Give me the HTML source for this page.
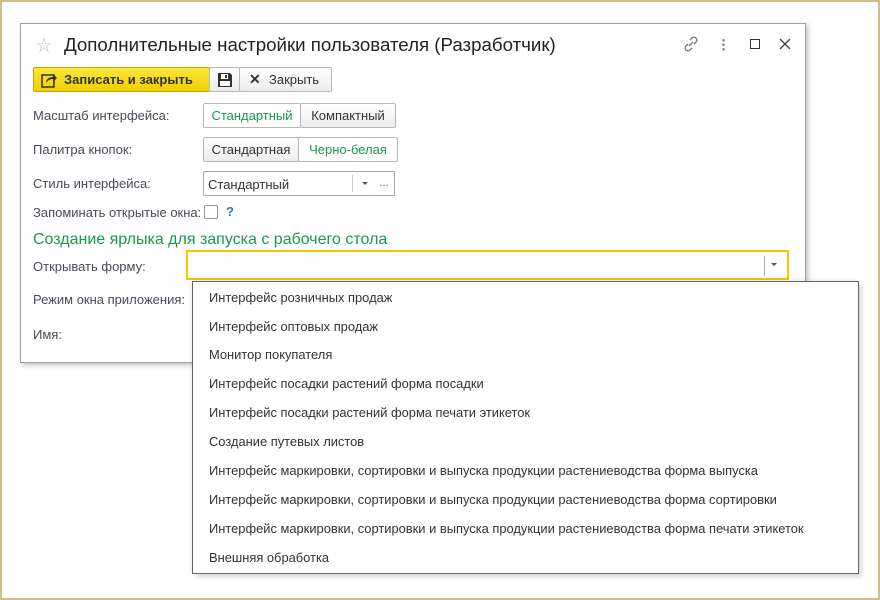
<!DOCTYPE html>
<html><head><meta charset="utf-8"><style>
*{box-sizing:border-box;margin:0;padding:0}
body{width:880px;height:600px;background:#fff;position:relative;overflow:hidden;font-family:"Liberation Sans",Arial,sans-serif;font-size:13px;color:#4d4d4d}
.a{position:absolute;white-space:nowrap}
.frame{left:0;top:0;width:880px;height:600px;border:2px solid #cfc08a;border-left-width:2px}
.win{left:20px;top:23px;width:786px;height:340px;border:1px solid #a0a0a0;background:#fff;box-shadow:2px 2px 5px rgba(0,0,0,.25)}
.btn{position:absolute;border:1px solid #b8b8b8;background:linear-gradient(#fff,#ececec);height:25px;line-height:23px;border-radius:2px;color:#333}
.lbl{position:absolute;color:#4a4a58}
.grn{color:#1a9a4a}
.dd{left:192px;top:281px;width:667px;height:293px;border:1px solid #666;background:#fff;box-shadow:3px 3px 4px rgba(0,0,0,.15),-2px -2px 3px rgba(0,0,0,.06)}
.it{position:absolute;left:16px;color:#333;font-size:12.9px}
</style></head><body>
<div class="a frame"></div>
<div class="a win"></div>
<div class="a" style="left:35px;top:33px;font-size:20px;color:#bbb">☆</div>
<div class="a" style="left:64px;top:34px;font-size:18.7px;color:#222">Дополнительные настройки пользователя (Разработчик)</div>
<svg class="a" style="left:682px;top:35px" width="18" height="18" viewBox="0 0 18 18" fill="none" stroke="#777" stroke-width="1.3"><path d="M7 11l4-4M8 5l2-2a2.8 2.8 0 014 4l-2 2M10 13l-2 2a2.8 2.8 0 01-4-4l2-2"/></svg>
<div class="a" style="left:722px;top:38px;width:3px;height:13px;background:radial-gradient(circle,#888 1.2px,transparent 1.4px) 0 0/3px 4.5px"></div>
<div class="a" style="left:750px;top:39px;width:10px;height:10px;border:1.5px solid #333"></div>
<svg class="a" style="left:779px;top:38px" width="12" height="12"><path d="M1 1L11 11M11 1L1 11" stroke="#444" stroke-width="1.3"/></svg>

<div class="btn" style="left:33px;top:67px;width:177px;background:linear-gradient(#fbe73c,#f0cf00);border-color:#c9a800;font-weight:bold;color:#333">
<svg style="position:absolute;left:7px;top:4px" width="16" height="16"><rect x="1" y="3" width="12" height="12" fill="none" stroke="#333" stroke-width="1.5"/><path d="M5 11c0-4 3-6 7-6V2l4 4-4 4V7c-3 0-5 1-7 4z" fill="#333"/></svg>
<span style="position:absolute;left:30px">Записать и закрыть</span></div>
<div class="btn" style="left:209px;top:67px;width:31px">
<svg style="position:absolute;left:7px;top:4px" width="16" height="16"><path d="M1 1h12l2 2v12H1z" fill="#333"/><rect x="4" y="2" width="7" height="5" fill="#fff"/><rect x="8" y="3" width="2" height="3" fill="#333"/><rect x="3" y="9" width="10" height="5" fill="#fff"/></svg></div>
<div class="btn" style="left:239px;top:67px;width:93px"><span style="position:absolute;left:9px;font-weight:bold;font-size:14px">✕</span><span style="position:absolute;left:29px">Закрыть</span></div>

<div class="lbl" style="left:33px;top:108px">Масштаб интерфейса:</div>
<div class="btn" style="left:203px;top:103px;width:98px;height:25px;background:#fff;text-align:center" ><span class="grn">Стандартный</span></div>
<div class="btn" style="left:300px;top:103px;width:96px;height:25px;text-align:center">Компактный</div>

<div class="lbl" style="left:33px;top:142px">Палитра кнопок:</div>
<div class="btn" style="left:203px;top:137px;width:96px;height:25px;text-align:center">Стандартная</div>
<div class="btn" style="left:298px;top:137px;width:100px;height:25px;background:#fff;text-align:center"><span class="grn">Черно-белая</span></div>

<div class="lbl" style="left:33px;top:176px">Стиль интерфейса:</div>
<div class="a" style="left:203px;top:171px;width:172px;height:25px;border:1px solid #aaa;background:#fff;border-radius:2px"><span style="position:absolute;left:4px;top:5px;color:#333">Стандартный</span><div style="position:absolute;left:148px;top:3px;width:1px;height:17px;background:#ccc"></div><div style="position:absolute;left:158px;top:10px;border:3px solid transparent;border-top:3px solid #555"></div></div>
<div class="a" style="left:374px;top:171px;width:21px;height:25px;border:1px solid #aaa;border-left:none;background:#fff;text-align:center;font-size:11px;line-height:23px;color:#555">...</div>

<div class="lbl" style="left:33px;top:205px">Запоминать открытые окна:</div>
<div class="a" style="left:204px;top:205px;width:14px;height:14px;border:1px solid #999;background:#fff;border-radius:2px"></div>
<div class="a" style="left:226px;top:204px;color:#2a7ab8;font-weight:bold">?</div>

<div class="a grn" style="left:33px;top:231px;font-size:16px">Создание ярлыка для запуска с рабочего стола</div>
<div class="lbl" style="left:33px;top:259px">Открывать форму:</div>
<div class="a" style="left:186px;top:250px;width:603px;height:30px;border:2px solid #f5c800;background:#fff"><div style="position:absolute;left:576px;top:4px;width:1px;height:20px;background:#aaa"></div><div style="position:absolute;left:583px;top:11px;border:3px solid transparent;border-top:3px solid #555"></div></div>
<div class="lbl" style="left:33px;top:292px">Режим окна приложения:</div>
<div class="lbl" style="left:33px;top:327px">Имя:</div>

<div class="a dd">
<div class="it" style="top:8px">Интерфейс розничных продаж</div>
<div class="it" style="top:37px">Интерфейс оптовых продаж</div>
<div class="it" style="top:65px">Монитор покупателя</div>
<div class="it" style="top:94px">Интерфейс посадки растений форма посадки</div>
<div class="it" style="top:123px">Интерфейс посадки растений форма печати этикеток</div>
<div class="it" style="top:152px">Создание путевых листов</div>
<div class="it" style="top:181px">Интерфейс маркировки, сортировки и выпуска продукции растениеводства форма выпуска</div>
<div class="it" style="top:210px">Интерфейс маркировки, сортировки и выпуска продукции растениеводства форма сортировки</div>
<div class="it" style="top:239px">Интерфейс маркировки, сортировки и выпуска продукции растениеводства форма печати этикеток</div>
<div class="it" style="top:268px">Внешняя обработка</div>
</div>
</body></html>
